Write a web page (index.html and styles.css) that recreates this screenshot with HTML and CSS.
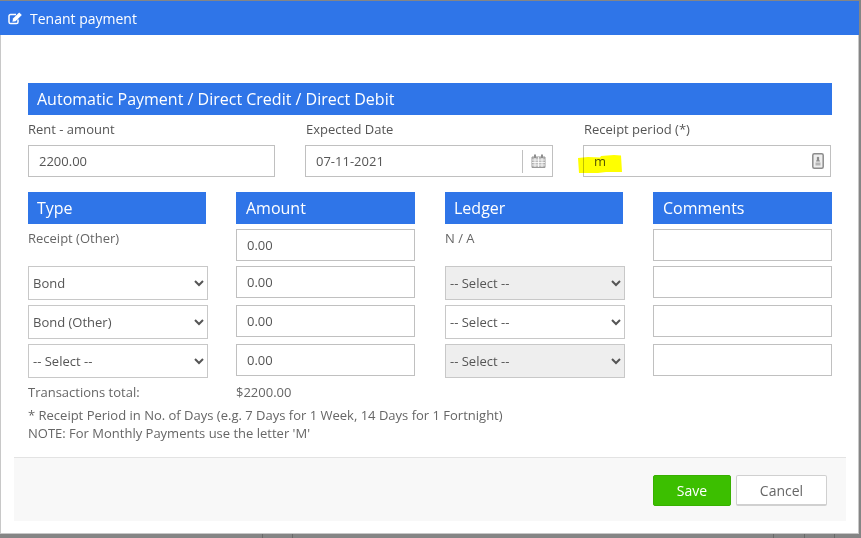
FILE: index.html
```html
<!DOCTYPE html>
<html lang="en">
<head>
<meta charset="utf-8">
<title>Tenant payment</title>
<link rel="stylesheet" href="styles.css">
</head>
<body>
<div class="frame">
  <div class="window">
    <header class="title-bar">
      <svg class="title-icon" width="15" height="13" viewBox="0 0 15 13" aria-hidden="true">
        <path d="M10 7.500V10a1.600 1.600 0 0 1-1.600 1.600H2.600A1.600 1.600 0 0 1 1 10V4.200a1.600 1.600 0 0 1 1.600-1.600H8" fill="none" stroke="#fff" stroke-width="1.500"/>
        <path d="M5 6.600 11.200 .6l2.600 2.500-6.200 6.100-3.200.6z" fill="#fff"/>
      </svg>
      <span>Tenant payment</span>
    </header>
    <div class="window-body">
      <main class="content">
        <h2 class="bar bar-wide">Automatic Payment / Direct Credit / Direct Debit</h2>
        <section class="top-fields">
          <div class="field">
            <label class="field-label" for="rent">Rent - amount</label>
            <input class="text-input" id="rent" type="text" value="2200.00">
          </div>
          <div class="field">
            <label class="field-label field-label-in" for="date">Expected Date</label>
            <div class="group">
              <input class="group-input" id="date" type="text" value="07-11-2021">
              <span class="group-sep"></span>
              <svg class="cal-icon" width="15" height="14" viewBox="0 0 15 14" aria-hidden="true">
                <path d="M1 3h13v10.500H1z" fill="#bdbdbd" stroke="#999"/>
                <path d="M1 6h13M1 8.500h13M1 11h13M4 3v10M7.500 3v10M11 3v10" stroke="#fff" stroke-width=".8"/>
                <path d="M4 .5v3.500M11 .5v3.500" stroke="#8e8e8e" stroke-width="2"/>
              </svg>
            </div>
          </div>
          <div class="field">
            <label class="field-label field-label-in" for="period">Receipt period (*)</label>
            <div class="group">
              <input class="group-input" id="period" type="text" value="m">
              <svg class="card-icon" width="12" height="16" viewBox="0 0 12 16" aria-hidden="true">
                <rect x=".8" y=".8" width="10.400" height="14.400" rx="1.500" fill="#eee" stroke="#8c8c8c" stroke-width="1.500"/>
                <path d="M6 3.800a1.300 1.300 0 0 1 .9 2.200L8 8.500H4L5.100 6A1.300 1.300 0 0 1 6 3.800z" fill="#8c8c8c"/>
                <rect x="3.500" y="9.500" width="5" height="3" fill="#b5b5b5"/>
              </svg>
              <svg class="marker" width="44" height="19" viewBox="0 0 44 19" aria-hidden="true">
                <path d="M0 3 10 2 22 2.500 23 1 36 0 43 .5 44 17 28 17 20 18 1 18z" fill="#ffff00"/>
              </svg>
            </div>
          </div>
        </section>

        <section class="table">
          <h3 class="bar">Type</h3>
          <h3 class="bar bar-shift">Amount</h3>
          <h3 class="bar">Ledger</h3>
          <h3 class="bar bar-shift">Comments</h3>

          <div class="plain">Receipt (Other)</div>
          <input class="text-input" type="text" value="0.00">
          <div class="plain">N / A</div>
          <input class="text-input" type="text">

          <select class="select"><option>Bond</option></select>
          <input class="text-input" type="text" value="0.00">
          <select class="select select-off"><option>-- Select --</option></select>
          <input class="text-input" type="text">

          <select class="select"><option>Bond (Other)</option></select>
          <input class="text-input" type="text" value="0.00">
          <select class="select"><option>-- Select --</option></select>
          <input class="text-input" type="text">

          <select class="select"><option>-- Select --</option></select>
          <input class="text-input" type="text" value="0.00">
          <select class="select select-off"><option>-- Select --</option></select>
          <input class="text-input" type="text">
        </section>

        <div class="total">
          <span class="total-label">Transactions total:</span>
          <span>$2200.00</span>
        </div>
        <p class="notes">* Receipt Period in No. of Days (e.g. 7 Days for 1 Week, 14 Days for 1 Fortnight)<br>NOTE: For Monthly Payments use the letter 'M'</p>
      </main>
      <footer class="actions">
        <button class="btn btn-save" type="button">Save</button>
        <button class="btn btn-cancel" type="button">Cancel</button>
      </footer>
    </div>
  </div>
  <div class="side-strip"></div>
</div>
<div class="bottom-strip"></div>
</body>
</html>
```

FILE: styles.css
```css
* { box-sizing: border-box; }

html, body { margin: 0; height: 100%; }

body {
  width: 861px;
  height: 538px;
  overflow: hidden;
  background: #858585;
  padding-top: 1px;
  font-family: "Open Sans", "Noto Sans", sans-serif;
  font-size: 13px;
  color: #666;
}

.frame { display: flex; height: 533px; }

.window {
  width: 859px;
  height: 533px;
  background: #fff;
  display: flex;
  flex-direction: column;
  border-bottom: 1px solid #c8c8c8;
}

.side-strip { width: 2px; background: #858585; }

.bottom-strip {
  height: 4px;
  background-color: #858585;
  background-image:
    linear-gradient(#6a6a6a, #6a6a6a),
    linear-gradient(#6a6a6a, #6a6a6a),
    linear-gradient(#6a6a6a, #6a6a6a),
    linear-gradient(#6a6a6a, #6a6a6a),
    linear-gradient(#6a6a6a, #6a6a6a);
  background-size: 1px 100%;
  background-repeat: no-repeat;
  background-position: 262px 0, 292px 0, 773px 0, 804px 0, 834px 0;
}

.title-bar {
  height: 34px;
  flex: none;
  background: #2f75e8;
  color: #fff;
  font-size: 14px;
  font-weight: 500;
  display: flex;
  align-items: center;
  padding-left: 8px;
  gap: 7px;
}

.title-icon { flex: none; }

.window-body {
  flex: 1;
  display: flex;
  flex-direction: column;
  border-left: 1px solid #c8c8c8;
  border-right: 1px solid #c8c8c8;
}

.content {
  flex: 1;
  padding: 48px 0 0 27px;
}

.bar {
  margin: 0;
  height: 32px;
  background: #2f75e8;
  color: #fff;
  font-size: 16px;
  font-weight: 500;
  line-height: 32px;
  padding-left: 9px;
  white-space: nowrap;
}

.bar-shift { padding-left: 10px; }

.bar-wide { width: 804px; }

.top-fields {
  display: grid;
  grid-template-columns: 247px 248px 248px;
  column-gap: 30px;
  margin-bottom: 15px;
}

.field { display: flex; flex-direction: column; }

.field-label {
  height: 30px;
  line-height: 28px;
  color: #555;
}

.field-label-in { padding-left: 1px; }

.text-input, .group, .select {
  border: 1px solid #c0c0c0;
  background: #fff;
  font-family: inherit;
  font-size: 13px;
  color: #555;
}

.text-input {
  width: 100%;
  height: 32px;
  padding: 0 10px;
  outline: none;
  display: block;
}

.group {
  position: relative;
  height: 32px;
  display: flex;
  align-items: center;
}

.group-input {
  flex: 1;
  min-width: 0;
  height: 100%;
  border: 0;
  padding: 0 10px;
  background: transparent;
  font: inherit;
  color: #555;
  outline: none;
}

.group-sep {
  width: 1px;
  height: 23px;
  background: #c0c0c0;
  margin-right: 8px;
}

.cal-icon { margin-right: 6px; flex: none; }

.card-icon { margin-right: 6px; flex: none; }

.marker {
  position: absolute;
  left: -6px;
  top: 9px;
  mix-blend-mode: multiply;
}

.table {
  display: grid;
  grid-template-columns: 178px 179px 178px 179px;
  column-gap: 30px;
  row-gap: 5px;
  align-items: start;
}

.plain { line-height: 18px; height: 32px; }

.select {
  width: 180px;
  height: 34px;
  border-color: #c8c8c8;
  outline: none;
}

.select-off { background: #eee; }

.total {
  display: flex;
  line-height: 18px;
  margin-top: 5px;
}

.total-label { width: 208px; }

.notes {
  margin: 5px 0 0;
  line-height: 18px;
}

.actions {
  flex: none;
  width: 832px;
  height: 64px;
  margin: 0 0 12px 13px;
  background: #f8f8f8;
  border-top: 1px solid #e3e3e3;
  display: flex;
  justify-content: flex-end;
  align-items: flex-start;
  gap: 5px;
  padding: 17px 19px 0 0;
}

.btn {
  height: 31px;
  border-radius: 2px;
  font-family: inherit;
  font-size: 14px;
  padding: 0;
}

.btn-save {
  width: 78px;
  background: #3cbf00;
  border: 1px solid #38b000;
  color: #fff;
}

.btn-cancel {
  width: 91px;
  background: #fff;
  border: 1px solid #d0d0d0;
  border-bottom-width: 2px;
  color: #666;
}
```
